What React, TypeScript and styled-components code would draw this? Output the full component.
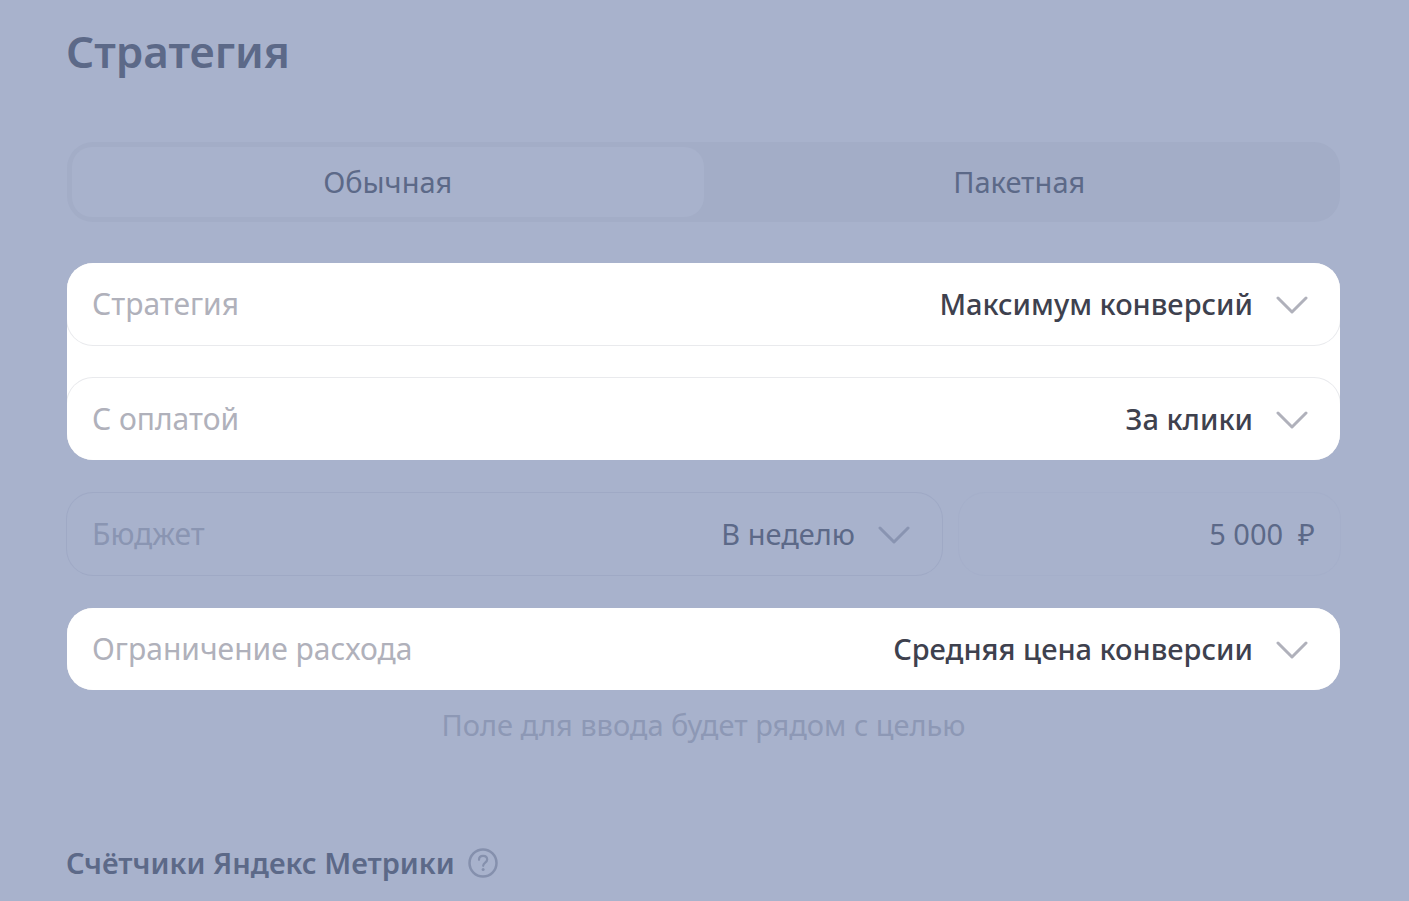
import React, { useState } from "react";
import styled, { createGlobalStyle } from "styled-components";

const GlobalStyle = createGlobalStyle`
  *, *::before, *::after { box-sizing: border-box; }
  body {
    margin: 0;
    background: #a8b2cc;
    font-family: "Noto Sans", "Open Sans", sans-serif;
    font-size: 29px;
    line-height: 40px;
    color: #5c6988;
  }
  button, input, select {
    font: inherit;
    color: inherit;
    margin: 0;
    border: 0;
    background: transparent;
  }
`;

const Page = styled.main`
  padding: 20px 69px 16px 66px;
`;

const Title = styled.h1`
  margin: 0 0 60px;
  font-size: 44px;
  line-height: 62px;
  font-weight: 600;
`;

const Segmented = styled.div`
  display: grid;
  grid-template-columns: 1fr 1fr;
  height: 80px;
  margin-bottom: 41px;
  padding: 5px;
  border-radius: 26px;
  background: #a3adc7;
`;

const Segment = styled.button<{ $active: boolean }>`
  padding: 0;
  border-radius: 20px;
  background: ${(p) => (p.$active ? "#a8b2cc" : "transparent")};
  cursor: pointer;
`;

const Form = styled.form`
  margin-left: 1px;
`;

const Fields = styled.div`
  display: flex;
  flex-direction: column;
  gap: 33px;
`;

const Highlight = styled.div`
  display: flex;
  flex-direction: column;
  gap: 33px;
  overflow: hidden;
  border-radius: 26px;
  background: #ffffff;
`;

const BudgetRow = styled.div`
  display: grid;
  grid-template-columns: 875fr 381fr;
  gap: 17px;
`;

const Field = styled.div<{ $dim?: boolean; $faint?: boolean }>`
  display: flex;
  align-items: center;
  position: relative;
  min-width: 0;
  height: 82px;
  padding-left: 25px;
  border-radius: 26px;
  color: ${(p) => (p.$dim ? "#5c6988" : "#3e414e")};
  background: ${(p) => (p.$dim ? "transparent" : "#ffffff")};
  box-shadow: 0 0 0 1px ${(p) => (p.$faint ? "#a5afca" : p.$dim ? "#9fa9c5" : "#e9eaed")};
`;

const Label = styled.label<{ $dim?: boolean }>`
  flex: none;
  font-size: 30px;
  color: ${(p) => (p.$dim ? "#8a95b2" : "#b0b1bb")};
`;

const Select = styled.select<{ $dim?: boolean }>`
  flex: 1;
  min-width: 0;
  height: 82px;
  padding: 0 87px 0 0;
  appearance: none;
  outline: none;
  font-weight: ${(p) => (p.$dim ? 400 : 500)};
  text-align: right;
  text-align-last: right;
  cursor: pointer;
`;

const ChevronIcon = styled.svg<{ $dim?: boolean }>`
  position: absolute;
  top: 32px;
  right: 32px;
  width: 32px;
  height: 20px;
  pointer-events: none;
  fill: none;
  stroke: ${(p) => (p.$dim ? "#8994b1" : "#b0b1bb")};
  stroke-width: 3;
  stroke-linecap: round;
  stroke-linejoin: round;
`;

const Amount = styled.input`
  flex: 1;
  min-width: 0;
  height: 40px;
  padding: 0;
  outline: none;
  text-align: right;
`;

const Currency = styled.span`
  padding: 0 25px 0 15px;
`;

const Hint = styled.p`
  margin: 15px 0 98px;
  text-align: center;
  color: #8d98b5;
`;

const Counters = styled.div`
  display: flex;
  align-items: center;
  gap: 12px;
`;

const Subtitle = styled.h2`
  margin: 0;
  font-size: 29px;
  line-height: 40px;
  font-weight: 600;
`;

const HelpButton = styled.button`
  display: flex;
  padding: 0;
  color: #8590ad;
  cursor: pointer;
`;

type SelectFieldProps = {
  id: string;
  label: string;
  options: string[];
  dim?: boolean;
};

function SelectField({ id, label, options, dim }: SelectFieldProps) {
  return (
    <Field $dim={dim}>
      <Label htmlFor={id} $dim={dim}>{label}</Label>
      <Select id={id} $dim={dim} defaultValue={options[0]}>
        {options.map((o) => (
          <option key={o}>{o}</option>
        ))}
      </Select>
      <ChevronIcon $dim={dim} viewBox="0 0 32 20" aria-hidden="true">
        <path d="M2 3 L16 17 L30 3" />
      </ChevronIcon>
    </Field>
  );
}

export default function App() {
  const [mode, setMode] = useState("Обычная");
  const [amount, setAmount] = useState("5 000");

  return (
    <>
      <GlobalStyle />
      <Page>
        <Title>Стратегия</Title>
        <Form>
          <Segmented>
            {["Обычная", "Пакетная"].map((m) => (
              <Segment
                key={m}
                type="button"
                $active={mode === m}
                aria-pressed={mode === m}
                onClick={() => setMode(m)}
              >
                {m}
              </Segment>
            ))}
          </Segmented>
          <Fields>
            <Highlight>
              <SelectField id="strategy" label="Стратегия" options={["Максимум конверсий"]} />
              <SelectField id="payment" label="С оплатой" options={["За клики"]} />
            </Highlight>
            <BudgetRow>
              <SelectField id="period" label="Бюджет" options={["В неделю"]} dim />
              <Field $dim $faint>
                <Amount
                  aria-label="Сумма бюджета"
                  value={amount}
                  onChange={(e) => setAmount(e.target.value)}
                />
                <Currency>₽</Currency>
              </Field>
            </BudgetRow>
            <Highlight>
              <SelectField id="limit" label="Ограничение расхода" options={["Средняя цена конверсии"]} />
            </Highlight>
          </Fields>
          <Hint>Поле для ввода будет рядом с целью</Hint>
        </Form>
        <Counters>
          <Subtitle>Счётчики Яндекс Метрики</Subtitle>
          <HelpButton type="button" aria-label="Справка">
            <svg width="32" height="32" viewBox="0 0 32 32" fill="none" stroke="currentColor" strokeWidth="2.5" strokeLinecap="round" aria-hidden="true">
              <circle cx="16" cy="16" r="13.5" />
              <path d="M12 12.8c0-2.4 1.7-3.9 4.1-3.9s4.1 1.4 4.1 3.6c0 3.1-4 3.2-4 6.3" strokeWidth="2.2" />
              <circle cx="16.1" cy="22.6" r="1.5" fill="currentColor" stroke="none" />
            </svg>
          </HelpButton>
        </Counters>
      </Page>
    </>
  );
}
